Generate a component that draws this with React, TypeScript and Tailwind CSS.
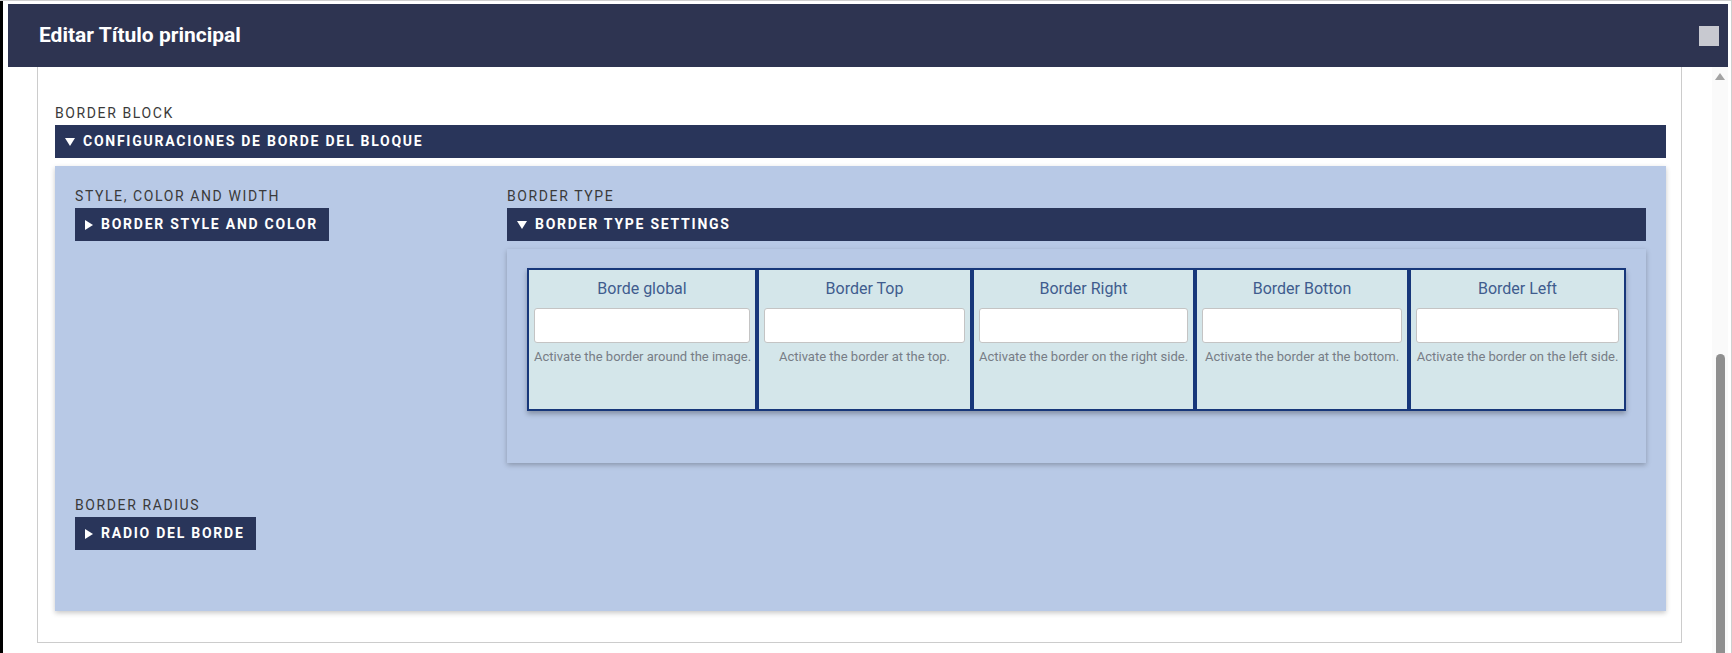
import React from "react";

function Caret({ open }: { open: boolean }) {
    return open ? (
        <svg width="10" height="8" viewBox="0 0 10 8" className="shrink-0">
            <polygon points="0,0 10,0 5,8" fill="white" />
        </svg>
    ) : (
        <svg width="8" height="10" viewBox="0 0 8 10" className="shrink-0">
            <polygon points="0,0 8,5 0,10" fill="white" />
        </svg>
    );
}

function Label({ text }: { text: string }) {
    return (
        <div className="pt-[2px] text-[14px] leading-[18px] tracking-[1.6px] text-[#3a3a3a] uppercase">{text}</div>
    );
}

function Toggle({ text, open, full }: { text: string; open: boolean; full?: boolean }) {
    return (
        <div
            className={`mt-[3px] h-[33px] bg-[#29355a] flex items-center gap-[8px] pl-[10px] pr-[11px] ${full ? "w-full" : "w-fit"}`}
        >
            <Caret open={open} />
            <span className="text-white font-bold text-[14px] tracking-[1.75px] uppercase">{text}</span>
        </div>
    );
}

const cards = [
    { title: "Borde global", help: "Activate the border around the image.", w: "w-[230px]" },
    { title: "Border Top", help: "Activate the border at the top.", w: "w-[215px]" },
    { title: "Border Right", help: "Activate the border on the right side.", w: "w-[223px]" },
    { title: "Border Botton", help: "Activate the border at the bottom.", w: "w-[214px]" },
    { title: "Border Left", help: "Activate the border on the left side.", w: "w-[217px]" },
];

export default function App() {
    return (
        <div className="w-[1732px] h-[653px] overflow-hidden bg-white flex font-['Roboto',sans-serif] border-t border-r border-[#cfcfcf]">
            <div className="w-[3px] bg-black shrink-0" />
            <div className="flex-1 flex flex-col pl-[5px] pt-[3px] pr-[3px] min-w-0">
                {/* modal header */}
                <div className="h-[63px] bg-[#2e3451] flex items-center justify-between pl-[31px] pr-[9px] shrink-0">
                    <h1 className="text-white font-bold text-[21px]">Editar Título principal</h1>
                    <div className="w-[20px] h-[20px] bg-[#c8c9d0]" />
                </div>

                <div className="flex flex-1 min-h-0">
                    <div className="flex-1 pl-[29px] pr-[30px]">
                        <div className="border-l border-r border-b border-[#cccccc] pl-[17px] pr-[15px] pt-[35px] pb-[31px]">
                            <Label text="Border Block" />
                            <Toggle text="Configuraciones de borde del bloque" open full />

                            <div className="mt-[8px] bg-[#b8c9e6] shadow-[0_2px_5px_rgba(0,0,0,0.22)] pl-[20px] pr-[20px] pt-[19px] pb-[61px]">
                                <div className="flex">
                                    <div className="w-[432px] shrink-0">
                                        <Label text="Style, color and width" />
                                        <Toggle text="Border style and color" open={false} />
                                    </div>
                                    <div className="flex-1">
                                        <Label text="Border type" />
                                        <Toggle text="Border type settings" open full />
                                        <div className="mt-[8px] bg-[#b8c9e6] shadow-[0_2px_5px_rgba(0,0,0,0.25)] px-[20px] pt-[19px] pb-[52px]">
                                            <div className="flex shadow-[0_3px_5px_rgba(0,0,0,0.28)]">
                                                {cards.map((c) => (
                                                    <div
                                                        key={c.title}
                                                        className={`${c.w} h-[143px] bg-[#d4e6ea] border-2 border-[#17377a] px-[5px] pt-[8px]`}
                                                    >
                                                        <div className="text-center text-[16px] leading-[22px] text-[#3f5c8e]">{c.title}</div>
                                                        <div className="mt-[8px] h-[35px] bg-white border border-[#c4c4c4] rounded-[3px]" />
                                                        <div className="mt-[5px] text-center text-[13px] leading-[18px] text-[#777d86] whitespace-nowrap">
                                                            {c.help}
                                                        </div>
                                                    </div>
                                                ))}
                                            </div>
                                        </div>
                                    </div>
                                </div>

                                <div className="mt-[31px]">
                                    <Label text="Border radius" />
                                    <Toggle text="Radio del borde" open={false} />
                                </div>
                            </div>
                        </div>
                    </div>

                    {/* scrollbar */}
                    <div className="w-[16px] bg-[#fafafa] flex flex-col items-center shrink-0">
                        <svg width="10" height="7" viewBox="0 0 10 7" className="mt-[6px]">
                            <polygon points="5,0 10,7 0,7" fill="#a3a3a3" />
                        </svg>
                        <div className="mt-[274px] w-[9px] flex-1 bg-[#8f8f8f] rounded-t-[5px]" />
                    </div>
                </div>
            </div>
        </div>
    );
}
